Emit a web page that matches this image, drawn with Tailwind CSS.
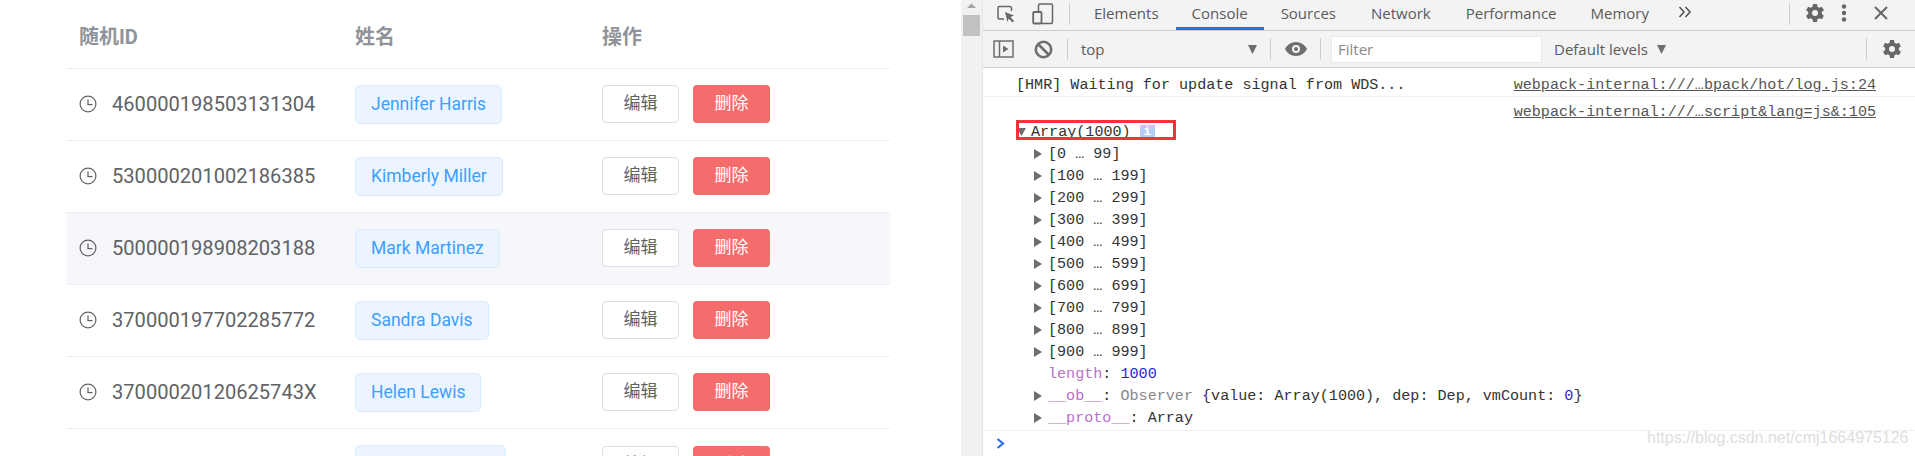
<!DOCTYPE html>
<html lang="zh">
<head>
<meta charset="UTF-8">
<title>Table and console</title>
<script src="https://cdn.jsdelivr.net/npm/@tailwindcss/browser@4"></script>
</head>
<body class="bg-white overflow-hidden">
<div class="relative flex w-[1915px] h-[456px] overflow-hidden">

  <!-- table side -->
  <div class="w-[961px] h-[456px] pl-[66px] overflow-hidden font-['Roboto','Noto_Sans_CJK_SC',sans-serif]">
    <div class="w-[824px]">
      <div class="grid grid-cols-[276px_247px_301px] h-[69px] items-center border-b border-[#ebeef5] text-[20px] font-bold text-[#909399] pt-[6px]">
        <div class="pl-[13px]">随机ID</div>
        <div class="pl-[13px]">姓名</div>
        <div class="pl-[13px]">操作</div>
      </div>

      <div class="grid grid-cols-[276px_247px_301px] h-[72px] items-center border-b border-[#ebeef5] pb-[1px]">
        <div class="flex items-center pl-[13px] text-[20.1px] text-[#606266]">
          <svg class="w-[18px] h-[18px] mr-[15px]" viewBox="0 0 18 18" fill="none" stroke="#606266" stroke-width="1.2"><circle cx="9" cy="9" r="7.9"/><path d="M9 4.4V9.6H13.4"/></svg>
          <span>460000198503131304</span>
        </div>
        <div class="pl-[13px]"><span class="inline-flex items-center h-[39px] px-[15px] rounded-[5px] bg-[#ecf5ff] border border-[#d9ecff] text-[#409eff] text-[17.5px]">Jennifer Harris</span></div>
        <div class="flex pl-[13px] gap-[14px]">
          <button class="w-[77px] h-[38px] rounded-[4px] border border-[#dcdfe6] bg-white text-[#606266] text-[17px]">编辑</button>
          <button class="w-[77px] h-[38px] rounded-[4px] bg-[#f56c6c] text-white text-[17px]">删除</button>
        </div>
      </div>

      <div class="grid grid-cols-[276px_247px_301px] h-[72px] items-center border-b border-[#ebeef5] pb-[1px]">
        <div class="flex items-center pl-[13px] text-[20.1px] text-[#606266]">
          <svg class="w-[18px] h-[18px] mr-[15px]" viewBox="0 0 18 18" fill="none" stroke="#606266" stroke-width="1.2"><circle cx="9" cy="9" r="7.9"/><path d="M9 4.4V9.6H13.4"/></svg>
          <span>530000201002186385</span>
        </div>
        <div class="pl-[13px]"><span class="inline-flex items-center h-[39px] px-[15px] rounded-[5px] bg-[#ecf5ff] border border-[#d9ecff] text-[#409eff] text-[17.5px]">Kimberly Miller</span></div>
        <div class="flex pl-[13px] gap-[14px]">
          <button class="w-[77px] h-[38px] rounded-[4px] border border-[#dcdfe6] bg-white text-[#606266] text-[17px]">编辑</button>
          <button class="w-[77px] h-[38px] rounded-[4px] bg-[#f56c6c] text-white text-[17px]">删除</button>
        </div>
      </div>

      <div class="grid grid-cols-[276px_247px_301px] h-[72px] items-center border-b border-[#ebeef5] pb-[1px] bg-[#f5f7fa]">
        <div class="flex items-center pl-[13px] text-[20.1px] text-[#606266]">
          <svg class="w-[18px] h-[18px] mr-[15px]" viewBox="0 0 18 18" fill="none" stroke="#606266" stroke-width="1.2"><circle cx="9" cy="9" r="7.9"/><path d="M9 4.4V9.6H13.4"/></svg>
          <span>500000198908203188</span>
        </div>
        <div class="pl-[13px]"><span class="inline-flex items-center h-[39px] px-[15px] rounded-[5px] bg-[#ecf5ff] border border-[#d9ecff] text-[#409eff] text-[17.5px]">Mark Martinez</span></div>
        <div class="flex pl-[13px] gap-[14px]">
          <button class="w-[77px] h-[38px] rounded-[4px] border border-[#dcdfe6] bg-white text-[#606266] text-[17px]">编辑</button>
          <button class="w-[77px] h-[38px] rounded-[4px] bg-[#f56c6c] text-white text-[17px]">删除</button>
        </div>
      </div>

      <div class="grid grid-cols-[276px_247px_301px] h-[72px] items-center border-b border-[#ebeef5] pb-[1px]">
        <div class="flex items-center pl-[13px] text-[20.1px] text-[#606266]">
          <svg class="w-[18px] h-[18px] mr-[15px]" viewBox="0 0 18 18" fill="none" stroke="#606266" stroke-width="1.2"><circle cx="9" cy="9" r="7.9"/><path d="M9 4.4V9.6H13.4"/></svg>
          <span>370000197702285772</span>
        </div>
        <div class="pl-[13px]"><span class="inline-flex items-center h-[39px] px-[15px] rounded-[5px] bg-[#ecf5ff] border border-[#d9ecff] text-[#409eff] text-[17.5px]">Sandra Davis</span></div>
        <div class="flex pl-[13px] gap-[14px]">
          <button class="w-[77px] h-[38px] rounded-[4px] border border-[#dcdfe6] bg-white text-[#606266] text-[17px]">编辑</button>
          <button class="w-[77px] h-[38px] rounded-[4px] bg-[#f56c6c] text-white text-[17px]">删除</button>
        </div>
      </div>

      <div class="grid grid-cols-[276px_247px_301px] h-[72px] items-center border-b border-[#ebeef5] pb-[1px]">
        <div class="flex items-center pl-[13px] text-[20.1px] text-[#606266]">
          <svg class="w-[18px] h-[18px] mr-[15px]" viewBox="0 0 18 18" fill="none" stroke="#606266" stroke-width="1.2"><circle cx="9" cy="9" r="7.9"/><path d="M9 4.4V9.6H13.4"/></svg>
          <span>37000020120625743X</span>
        </div>
        <div class="pl-[13px]"><span class="inline-flex items-center h-[39px] px-[15px] rounded-[5px] bg-[#ecf5ff] border border-[#d9ecff] text-[#409eff] text-[17.5px]">Helen Lewis</span></div>
        <div class="flex pl-[13px] gap-[14px]">
          <button class="w-[77px] h-[38px] rounded-[4px] border border-[#dcdfe6] bg-white text-[#606266] text-[17px]">编辑</button>
          <button class="w-[77px] h-[38px] rounded-[4px] bg-[#f56c6c] text-white text-[17px]">删除</button>
        </div>
      </div>

      <!-- row cut off by the bottom of the window -->
      <div class="grid grid-cols-[276px_247px_301px] h-[72px] items-center pb-[1px]">
        <div></div>
        <div class="pl-[13px]"><div class="w-[151px] h-[39px] rounded-[5px] bg-[#ecf5ff] border border-[#d9ecff]"></div></div>
        <div class="flex pl-[13px] gap-[14px]">
          <button class="w-[77px] h-[38px] rounded-[4px] border border-[#dcdfe6] bg-white text-[#606266] text-[17px]">编辑</button>
          <button class="w-[77px] h-[38px] rounded-[4px] bg-[#f56c6c] text-white text-[17px]">删除</button>
        </div>
      </div>
    </div>
  </div>

  <!-- page scrollbar -->
  <div class="w-[21px] h-[456px] bg-[#f1f1f1] flex flex-col items-center shrink-0">
    <svg class="w-[21px] h-[15px]" viewBox="0 0 21 15"><path d="M6 8L10.500 3.500L15 8Z" fill="#a3a3a3"/></svg>
    <div class="w-[17px] h-[21px] bg-[#c1c1c1]"></div>
  </div>

  <!-- devtools -->
  <div class="w-[933px] h-[456px] border-l border-[#e4e4e4] flex flex-col overflow-hidden shrink-0">
    <div class="h-[31px] bg-[#f3f3f3] border-b border-[#cdcdcd] flex items-center text-[15px] text-[#5a5a5a] font-['Open_Sans',sans-serif] shrink-0">
      <svg class="w-[20px] h-[20px] ml-[13px] mb-[2px]" viewBox="0 0 20 20" fill="none" stroke="#666" stroke-width="1.500"><path d="M8 15H3.500A1.500 1.500 0 0 1 2 13.500V4A1.500 1.500 0 0 1 3.500 2.500H14A1.500 1.500 0 0 1 15.500 4V7"/><path d="M9 8L18 11.500L14.500 13L18 17L16.500 18.500L12.800 14.500L11.500 18Z" fill="#666" stroke="none"/></svg>
      <svg class="w-[22px] h-[22px] ml-[16px] mb-[2px]" viewBox="0 0 22 22" fill="none" stroke="#666" stroke-width="1.500"><path d="M6.500 8V2.500A1.500 1.500 0 0 1 8 1H19A1.500 1.500 0 0 1 20.500 2.500V19A1.500 1.500 0 0 1 19 20.500H9.500"/><rect x="1.200" y="9" width="8.300" height="11.500" rx="1" stroke-width="1.800"/></svg>
      <div class="w-px h-[22px] bg-[#cdcdcd] ml-[15px] mb-[2px]"></div>
      <div class="ml-[7px] px-[17px] h-[30px] flex items-center pb-[3px]">Elements</div>
      <div class="px-[16px] h-[30px] flex items-center border-b-[3px] border-[#1a73e8]">Console</div>
      <div class="pl-[17px] pr-[18px] h-[30px] flex items-center pb-[3px]">Sources</div>
      <div class="px-[17px] h-[30px] flex items-center pb-[3px]">Network</div>
      <div class="pl-[18px] pr-[17px] h-[30px] flex items-center pb-[3px]">Performance</div>
      <div class="px-[17px] h-[30px] flex items-center pb-[3px]">Memory</div>
      <svg class="w-[14px] h-[12px] ml-[12px] mb-[6px]" viewBox="0 0 14 12" fill="none" stroke="#555" stroke-width="1.600"><path d="M1.500 1L6 6L1.500 11M7.500 1L12 6L7.500 11"/></svg>
      <div class="w-px h-[22px] bg-[#cdcdcd] ml-[97px] mb-[2px]"></div>
      <svg class="w-[20px] h-[20px] ml-[15px] mb-[4px]" viewBox="0 0 20 20"><path fill="#666" fill-rule="evenodd" d="M8 1H12L12.500 3.700L14.300 4.700L16.900 3.800L18.900 7.200L16.800 9V11L18.900 12.800L16.900 16.200L14.300 15.300L12.500 16.300L12 19H8L7.500 16.300L5.700 15.300L3.100 16.200L1.100 12.800L3.200 11V9L1.100 7.200L3.100 3.800L5.700 4.700L7.500 3.700ZM10 7A3 3 0 1 0 10 13A3 3 0 1 0 10 7Z"/></svg>
      <svg class="w-[6px] h-[20px] ml-[16px] mb-[4px]" viewBox="0 0 6 20" fill="#666"><circle cx="3" cy="3.500" r="2.200"/><circle cx="3" cy="10" r="2.200"/><circle cx="3" cy="16.500" r="2.200"/></svg>
      <svg class="w-[14px] h-[14px] ml-[27px] mb-[4px]" viewBox="0 0 14 14" stroke="#666" stroke-width="2"><path d="M1 1L13 13M13 1L1 13"/></svg>
    </div>

    <div class="h-[37px] bg-[#f3f3f3] border-b border-[#cdcdcd] flex items-center text-[15px] text-[#5a5a5a] font-['Open_Sans',sans-serif] shrink-0">
      <svg class="w-[21px] h-[18px] ml-[10px]" viewBox="0 0 21 18" fill="none" stroke="#6e6e6e" stroke-width="1.500"><rect x="1" y="1" width="19" height="16"/><path d="M6.500 1V17"/><path d="M10 5.500L15.500 9L10 12.500Z" fill="#6e6e6e" stroke="none"/></svg>
      <svg class="w-[19px] h-[19px] ml-[20px]" viewBox="0 0 19 19" fill="none" stroke="#6e6e6e" stroke-width="2.600"><circle cx="9.500" cy="9.500" r="7.700"/><path d="M4 4L15 15"/></svg>
      <div class="w-px h-[22px] bg-[#cdcdcd] ml-[14px]"></div>
      <div class="ml-[13px] w-[167px]">top</div>
      <svg class="w-[9px] h-[9px]" viewBox="0 0 9 9"><path d="M0 0H9L4.500 9Z" fill="#6e6e6e"/></svg>
      <div class="w-px h-[22px] bg-[#cdcdcd] ml-[13px]"></div>
      <svg class="w-[22px] h-[14px] ml-[14px]" viewBox="0 0 22 14"><path fill="#6e6e6e" fill-rule="evenodd" d="M11 0C16 0 20 3 22 7C20 11 16 14 11 14C6 14 2 11 0 7C2 3 6 0 11 0ZM11 3A4 4 0 1 0 11 11A4 4 0 1 0 11 3ZM11 5A2 2 0 1 1 11 9A2 2 0 1 1 11 5Z"/></svg>
      <div class="w-px h-[22px] bg-[#cdcdcd] ml-[13px]"></div>
      <div class="ml-[10px] w-[211px] h-[27px] bg-white border border-[#e8e8e8] pl-[6px] flex items-center text-[#8a8a8a]">Filter</div>
      <div class="ml-[12px] w-[103px]">Default levels</div>
      <svg class="w-[9px] h-[9px]" viewBox="0 0 9 9"><path d="M0 0H9L4.500 9Z" fill="#6e6e6e"/></svg>
      <div class="w-px h-[22px] bg-[#cdcdcd] ml-[200px]"></div>
      <svg class="w-[20px] h-[20px] ml-[15px]" viewBox="0 0 20 20"><path fill="#666" fill-rule="evenodd" d="M8 1H12L12.500 3.700L14.300 4.700L16.900 3.800L18.900 7.200L16.800 9V11L18.900 12.800L16.900 16.200L14.300 15.300L12.500 16.300L12 19H8L7.500 16.300L5.700 15.300L3.100 16.200L1.100 12.800L3.200 11V9L1.100 7.200L3.100 3.800L5.700 4.700L7.500 3.700ZM10 7A3 3 0 1 0 10 13A3 3 0 1 0 10 7Z"/></svg>
    </div>

    <div class="flex-1 font-['Liberation_Mono',monospace] text-[15.1px] leading-[22px] text-[#333]">
      <div class="h-[29px] border-b border-[#f0f0f0] flex items-center justify-between pt-[6px] pl-[33px] pr-[39px]">
        <span>[HMR] Waiting for update signal from WDS...</span>
        <span class="underline text-[#555]">webpack-internal:///…bpack/hot/log.js:24</span>
      </div>
      <div class="h-[23px] flex items-center justify-end pt-[5px] pr-[39px] mt-[1px]">
        <span class="underline text-[#555]">webpack-internal:///…script&amp;lang=js&amp;:105</span>
      </div>
      <div class="h-[22px] flex items-center pl-[34px]">
        <svg class="w-[9px] h-[8px] mr-[5px]" viewBox="0 0 9 8"><path d="M0 0H9L4.500 8Z" fill="#6e6e6e"/></svg>
        <span>Array(1000)</span>
        <span class="ml-[9px] w-[15px] h-[14px] bg-[#b5cdf5] text-white text-[13px] leading-[14px] text-center font-bold">i</span>
      </div>
      <div class="pl-[51px] flex items-center h-[22px]"><svg class="w-[8px] h-[10px] mr-[6px]" viewBox="0 0 8 10"><path d="M0 0L8 5L0 10Z" fill="#6e6e6e"/></svg><span>[0 … 99]</span></div>
      <div class="pl-[51px] flex items-center h-[22px]"><svg class="w-[8px] h-[10px] mr-[6px]" viewBox="0 0 8 10"><path d="M0 0L8 5L0 10Z" fill="#6e6e6e"/></svg><span>[100 … 199]</span></div>
      <div class="pl-[51px] flex items-center h-[22px]"><svg class="w-[8px] h-[10px] mr-[6px]" viewBox="0 0 8 10"><path d="M0 0L8 5L0 10Z" fill="#6e6e6e"/></svg><span>[200 … 299]</span></div>
      <div class="pl-[51px] flex items-center h-[22px]"><svg class="w-[8px] h-[10px] mr-[6px]" viewBox="0 0 8 10"><path d="M0 0L8 5L0 10Z" fill="#6e6e6e"/></svg><span>[300 … 399]</span></div>
      <div class="pl-[51px] flex items-center h-[22px]"><svg class="w-[8px] h-[10px] mr-[6px]" viewBox="0 0 8 10"><path d="M0 0L8 5L0 10Z" fill="#6e6e6e"/></svg><span>[400 … 499]</span></div>
      <div class="pl-[51px] flex items-center h-[22px]"><svg class="w-[8px] h-[10px] mr-[6px]" viewBox="0 0 8 10"><path d="M0 0L8 5L0 10Z" fill="#6e6e6e"/></svg><span>[500 … 599]</span></div>
      <div class="pl-[51px] flex items-center h-[22px]"><svg class="w-[8px] h-[10px] mr-[6px]" viewBox="0 0 8 10"><path d="M0 0L8 5L0 10Z" fill="#6e6e6e"/></svg><span>[600 … 699]</span></div>
      <div class="pl-[51px] flex items-center h-[22px]"><svg class="w-[8px] h-[10px] mr-[6px]" viewBox="0 0 8 10"><path d="M0 0L8 5L0 10Z" fill="#6e6e6e"/></svg><span>[700 … 799]</span></div>
      <div class="pl-[51px] flex items-center h-[22px]"><svg class="w-[8px] h-[10px] mr-[6px]" viewBox="0 0 8 10"><path d="M0 0L8 5L0 10Z" fill="#6e6e6e"/></svg><span>[800 … 899]</span></div>
      <div class="pl-[51px] flex items-center h-[22px]"><svg class="w-[8px] h-[10px] mr-[6px]" viewBox="0 0 8 10"><path d="M0 0L8 5L0 10Z" fill="#6e6e6e"/></svg><span>[900 … 999]</span></div>
      <div class="pl-[65px] h-[22px]"><span class="text-[#b871c8]">length</span>: <span class="text-[#2a1fd6]">1000</span></div>
      <div class="pl-[51px] flex items-center h-[22px]"><svg class="w-[8px] h-[10px] mr-[6px]" viewBox="0 0 8 10"><path d="M0 0L8 5L0 10Z" fill="#6e6e6e"/></svg><span><span class="text-[#b871c8]">__ob__</span>: <span class="text-[#888]">Observer</span> {value: Array(1000), dep: Dep, vmCount: <span class="text-[#2a1fd6]">0</span>}</span></div>
      <div class="pl-[51px] flex items-center h-[22px]"><svg class="w-[8px] h-[10px] mr-[6px]" viewBox="0 0 8 10"><path d="M0 0L8 5L0 10Z" fill="#6e6e6e"/></svg><span><span class="text-[#b871c8]">__proto__</span>: Array</span></div>
      <div class="mt-[1px] border-t border-[#f0f0f0] h-[26px] flex items-center pl-[13px]">
        <svg class="w-[9px] h-[11px]" viewBox="0 0 9 11" fill="none" stroke="#2f6fe8" stroke-width="2.200"><path d="M1.500 1L7 5.500L1.500 10"/></svg>
      </div>
    </div>
  </div>

  <!-- annotation box drawn over the console -->
  <div class="absolute left-[1016px] top-[120px] w-[160px] h-[20px] border-[3px] border-[#f5333a]"></div>
  <!-- watermark -->
  <div class="absolute left-[1647px] top-[428px] text-[16px] leading-[20px] text-[#dedede] font-['Liberation_Sans',sans-serif]">https://blog.csdn.net/cmj1664975126</div>
</div>
</body>
</html>
